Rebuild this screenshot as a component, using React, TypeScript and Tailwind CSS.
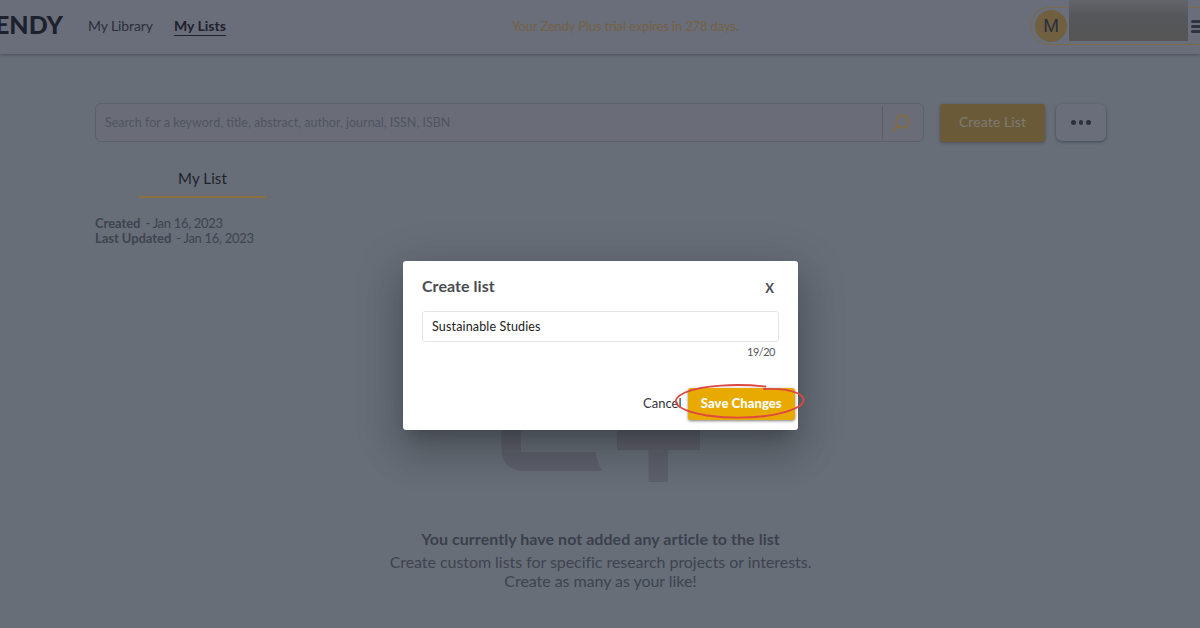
import React from 'react';

const App: React.FC = () => (
    <div className="relative h-[628px] w-[1200px] overflow-hidden bg-[#676e78] font-['Lato','Open_Sans',sans-serif] text-[#3e434f]">
        <Header />

        <main className="w-[1012px] ml-[95px] pt-[48px]">
            <SearchBar />

            {/* Tabs */}
            <div className="mt-[15px] h-[40px] border-b border-[#6a6c75] pl-[44px]">
                <div className="w-[127px] h-[40px] border-b-2 border-[#8a6f3c] flex items-center justify-center pt-[2px] text-[15px] leading-none tracking-[0.1px] text-[#1f222b]">
                    My List
                </div>
            </div>

            <div className="mt-[18px] text-[13px] leading-[15px] whitespace-nowrap">
                <p><b className="tracking-[-0.05px]">Created</b><span className="ml-[5px] tracking-[-0.3px]">- Jan 16, 2023</span></p>
                <p><b className="tracking-[-0.05px]">Last Updated</b><span className="ml-[5px] tracking-[-0.3px]">- Jan 16, 2023</span></p>
            </div>

            <EmptyState />
        </main>

        <div className="absolute inset-0 flex justify-center items-start pt-[261px] pl-[1px]">
            <CreateListDialog />
        </div>
    </div>
);

// ── Sub-components ────────────────────────────────────────────────────────────

const Header: React.FC = () => (
    <header className="h-[54px] mb-[1px] bg-[#6a6e7a] shadow-[0_1px_3px_rgba(30,34,48,0.4)] flex items-start overflow-hidden">
        <div className="w-[63px] h-[48px] flex justify-end items-center shrink-0 text-[25px] font-black leading-none text-[#1d212d]">ZENDY</div>
        <nav className="flex shrink-0 ml-[25px] pt-[18px] text-[14px] leading-[16px] whitespace-nowrap">
            <span className="w-[86px] tracking-[-0.1px] text-[#2a2e3a]">My Library</span>
            <span className="w-[52px] h-[18px] border-b-[1.5px] border-[#1f2330] font-bold text-[#1d212d]">My Lists</span>
        </nav>
        <p className="shrink-0 ml-[286px] w-[230px] pt-[18px] text-[13px] leading-[16px] tracking-[-0.14px] whitespace-nowrap text-[#736144]">Your Zendy Plus trial expires in 278 days.</p>
        <div className="ml-[288px] mt-[7px] w-[200px] h-[38px] shrink-0 rounded-full border border-[#7b6947] flex items-center pl-[4px]">
            <span className="w-[32px] h-[32px] shrink-0 rounded-full bg-[#70603f] flex items-center justify-center text-[18px] leading-none text-[#2b303f] font-['Roboto',sans-serif]">M</span>
            <span className="ml-[2px] -mt-[8px] self-start w-[119px] h-[41px] shrink-0 bg-linear-to-b from-[#62656b] via-[#56575a] via-40% to-[#555555]" />
            <span className="ml-[3px] flex flex-col gap-[2px]">
                <i className="w-[16px] h-[3px] bg-[#2f3340] rounded-full" />
                <i className="w-[16px] h-[3px] bg-[#2f3340] rounded-full" />
                <i className="w-[16px] h-[3px] bg-[#2f3340] rounded-full" />
            </span>
        </div>
    </header>
);

const SearchBar: React.FC = () => (
    <div className="flex items-start h-[40px]">
        <div className="w-[829px] h-[39px] rounded-[6px] border border-[#5d606b] bg-[#6a6d78] flex items-center">
            <span className="flex-1 pl-[9px] pt-[1px] text-[12.5px] leading-none text-[#50545f] whitespace-nowrap">
                Search for a keyword, title, abstract, author, journal, ISSN, ISBN
            </span>
            <span className="w-[41px] h-[33px] border-l border-[#5b5f69] flex items-center justify-center pr-[4px]">
                <svg width="18" height="18" viewBox="0 0 18 18" fill="none" stroke="#856d3a" strokeWidth="1.5" strokeLinecap="round">
                    <circle cx="10.2" cy="7.7" r="6.3" />
                    <path d="M5.8 12.2 1.3 16.6" />
                </svg>
            </span>
        </div>
        <button className="ml-[16px] mt-[1px] w-[105px] h-[38px] rounded-[3px] bg-[#6b5a38] shadow-[0_1px_3px_rgba(30,34,48,0.4)] pb-[3px] text-[14px] tracking-[0.1px] text-[#7c7a74]">
            Create List
        </button>
        <button className="ml-[11px] mt-[1px] w-[50px] h-[37px] rounded-[6px] bg-[#6a6e7a] shadow-[0_1px_3px_rgba(30,34,48,0.5)] flex items-center justify-center gap-[3px]">
            <i className="w-[4.5px] h-[4.5px] rounded-full bg-[#2d313e]" />
            <i className="w-[4.5px] h-[4.5px] rounded-full bg-[#2d313e]" />
            <i className="w-[4.5px] h-[4.5px] rounded-full bg-[#2d313e]" />
        </button>
    </div>
);

const EmptyState: React.FC = () => (
    <div className="-ml-[1px] mt-[134px] flex flex-col items-center whitespace-nowrap">
        <svg className="mr-[2px]" width="240" height="110" viewBox="0 0 240 110" fill="#5e616c">
            <path d="M21.5 0H41v72h74.500q1.500 9 6.500 19H42q-20.500-2-20.500-22z" />
            <path d="M137 50h83v20h-32v32h-19.500V70H137z" />
        </svg>
        <p className="mt-[39px] text-[16px] leading-[20px] tracking-[0.05px] font-bold text-[#3b404c]">You currently have not added any article to the list</p>
        <p className="mt-[3px] text-[16px] leading-[19px] tracking-[-0.05px] text-center text-[#3e434f]">
            Create custom lists for specific research projects or interests.<br />Create as many as your like!
        </p>
    </div>
);

const CreateListDialog: React.FC = () => (
    <div
        role="dialog"
        className="w-[395px] h-[168.500px] rounded-[3px] bg-white px-[19px] pt-[15px] shadow-[0_11px_15px_-7px_rgba(0,0,0,0.2),0_24px_38px_3px_rgba(0,0,0,0.14),0_9px_46px_8px_rgba(0,0,0,0.12)]"
    >
        <div className="flex items-center justify-between h-[20px] pr-[4px] text-[#4a4b50]">
            <h2 className="text-[16px] font-bold leading-[20px] tracking-[0.05px]">Create list</h2>
            <span className="pt-[4px] pr-[1px] text-[13px] font-bold leading-none">X</span>
        </div>
        <div className="mt-[15px] h-[31px] rounded-[3px] border border-[#e4e4e4] flex items-center pl-[9px] pt-[2px] text-[12.5px] tracking-[0.16px] text-[#222222]">
            Sustainable Studies
        </div>
        <p className="mt-[3px] pr-[4px] text-right text-[11px] leading-[14px] tracking-[-0.5px] text-[#55565b]">19/20</p>
        <div className="relative mt-[29px] -mr-[16px] flex justify-end items-center">
            <span className="mr-[6px] text-[13px] text-[#33343a]">Cancel</span>
            <button className="w-[107.500px] h-[32px] rounded-[3px] bg-[#e9aa00] shadow-[0_1px_3px_rgba(0,0,0,0.5)] text-[13px] font-black tracking-[0.08px] text-white whitespace-nowrap">
                Save Changes
            </button>
            {/* Hand-drawn highlight */}
            <svg className="absolute -right-[12px] -top-[7px]" width="134" height="42" viewBox="0 0 134 42" fill="none" stroke="#dd4840" strokeWidth="1.8" strokeLinecap="round">
                <path d="M92.500 5.500C64 2.500 29 4 12 11.500C-6 20 3 29 34 34.500C74 40 113 34.500 128 24C137 15 122 7 91 8" />
            </svg>
        </div>
    </div>
);

export default App;
